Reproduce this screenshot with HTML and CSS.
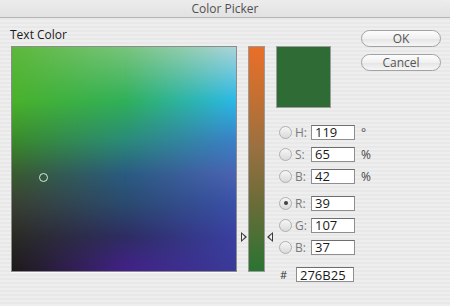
FILE: index.html
```html
<!DOCTYPE html>
<html lang="en">

<head>
    <meta charset="UTF-8">
    <title>Color Picker</title>
    <link rel="stylesheet" href="styles.css">
</head>

<body>
    <div class="window">
        <div class="titlebar">Color Picker</div>
        <div class="content">
            <div class="picker-col">
                <div class="picker-label">Text Color</div>
                <div class="field">
                    <div class="marker"></div>
                </div>
            </div>

            <div class="slider-col">
                <div class="slider">
                    <span class="arrow arrow-left"></span>
                    <span class="arrow arrow-right"></span>
                </div>
            </div>

            <div class="values-col">
                <div class="swatch"></div>

                <div class="value-group">
                    <div class="value-row">
                        <span class="radio"></span>
                        <label class="value-label">H:</label>
                        <input class="value-input" type="text" value="119">
                        <span class="unit">°</span>
                    </div>
                    <div class="value-row">
                        <span class="radio"></span>
                        <label class="value-label">S:</label>
                        <input class="value-input" type="text" value="65">
                        <span class="unit">%</span>
                    </div>
                    <div class="value-row">
                        <span class="radio"></span>
                        <label class="value-label">B:</label>
                        <input class="value-input" type="text" value="42">
                        <span class="unit">%</span>
                    </div>
                </div>

                <div class="value-group">
                    <div class="value-row">
                        <span class="radio checked"></span>
                        <label class="value-label">R:</label>
                        <input class="value-input" type="text" value="39">
                    </div>
                    <div class="value-row">
                        <span class="radio"></span>
                        <label class="value-label">G:</label>
                        <input class="value-input" type="text" value="107">
                    </div>
                    <div class="value-row">
                        <span class="radio"></span>
                        <label class="value-label">B:</label>
                        <input class="value-input" type="text" value="37">
                    </div>
                </div>

                <div class="hex-row">
                    <span class="hash">#</span>
                    <input class="hex-input" type="text" value="276B25">
                </div>
            </div>

            <div class="buttons-col">
                <button class="aqua-btn">OK</button>
                <button class="aqua-btn">Cancel</button>
            </div>
        </div>
    </div>
</body>

</html>
```

FILE: styles.css
```css
/* Aqua style color picker dialog */
body {
    margin: 0;
    padding: 0;
    font-family: "Open Sans", "DejaVu Sans", sans-serif;
    background-color: #ebebeb;
}

.window {
    width: 450px;
    height: 306px;
    overflow: hidden;
    background: repeating-linear-gradient(to bottom, #eeeeee 0, #eeeeee 2px, #e8e8e8 2px, #e8e8e8 4px);
}

.titlebar {
    height: 17px;
    line-height: 17px;
    text-align: center;
    font-size: 12px;
    color: #505050;
    background: linear-gradient(#ececec, #e2e2e2);
    border-bottom: 1px solid #b4b4b4;
    border-top-right-radius: 6px;
}

.content {
    display: flex;
    align-items: flex-start;
    padding: 10px 0 0 11px;
}

.content > div {
    flex-shrink: 0;
}

/* color field */
.picker-label {
    height: 18px;
    line-height: 14px;
    font-size: 12px;
    color: #1a1a1a;
    margin-left: -1px;
}

.field {
    position: relative;
    width: 224px;
    height: 224px;
    border: 1px solid #8c8c8c;
    box-shadow: 0 1px 0 #fafafa;
    background: linear-gradient(to bottom, #5cb83c 0%, #4ab22c 24%, #3a8a2a 42%, #3a5a30 57%, #3a4032 70%, #2a2a24 85%, #1c1a18 100%);
}

.field::before,
.field::after {
    content: "";
    position: absolute;
    inset: 0;
}

.field::before {
    background: linear-gradient(to bottom, #78c47c 0%, #30b058 24%, #2a8a78 42%, #2a5a80 57%, #2a4a6e 70%, #2e2c62 85%, #44208a 100%);
    -webkit-mask-image: linear-gradient(to right, transparent 0%, #000 50%, #000 100%);
    mask-image: linear-gradient(to right, transparent 0%, #000 50%, #000 100%);
}

.field::after {
    background: linear-gradient(to bottom, #aad4da 0%, #2ab8e8 24%, #3a80c8 42%, #4a62b2 57%, #3a50a8 70%, #3a40a0 85%, #3a3a98 100%);
    -webkit-mask-image: linear-gradient(to right, transparent 50%, #000 100%);
    mask-image: linear-gradient(to right, transparent 50%, #000 100%);
}

.marker {
    position: absolute;
    left: 27px;
    top: 126px;
    width: 7px;
    height: 7px;
    border: 1.5px solid #d8f0d0;
    border-radius: 50%;
    z-index: 1;
}

/* hue slider */
.slider-col {
    margin-top: 18px;
    margin-left: 11px;
}

.slider {
    position: relative;
    width: 15px;
    height: 224px;
    border: 1px solid #9a9a9a;
    background: linear-gradient(to bottom, #ea6e28 0%, #c87030 20%, #9a7040 45%, #6a6c38 70%, #2a7432 100%);
}

.arrow {
    position: absolute;
    top: 185px;
    width: 0;
    height: 0;
    border-top: 5px solid transparent;
    border-bottom: 5px solid transparent;
}

.arrow::after {
    content: "";
    position: absolute;
    top: -3px;
    width: 0;
    height: 0;
    border-top: 3px solid transparent;
    border-bottom: 3px solid transparent;
}

.arrow-left {
    left: -8px;
    border-left: 6px solid #3a3a3a;
}

.arrow-left::after {
    left: -5px;
    border-left: 3px solid #f2f2f2;
}

.arrow-right {
    right: -9px;
    border-right: 6px solid #3a3a3a;
}

.arrow-right::after {
    right: -5px;
    border-right: 3px solid #f2f2f2;
}

/* values */
.values-col {
    margin-top: 18px;
    margin-left: 11px;
    width: 85px;
}

.swatch {
    width: 53px;
    height: 60px;
    border: 1px solid #9c9c9c;
    background-color: #2f6b34;
}

.value-group {
    display: flex;
    flex-direction: column;
    gap: 8px;
    margin-top: 17px;
}

.value-group + .value-group {
    margin-top: 13px;
}

.value-row {
    display: flex;
    align-items: center;
    height: 14px;
}

.value-row > *,
.hex-row > * {
    flex-shrink: 0;
}

.radio {
    position: relative;
    box-sizing: border-box;
    width: 13px;
    height: 13px;
    margin-left: 3px;
    border: 1px solid #b0b0b0;
    border-radius: 50%;
    background: linear-gradient(#f6f6f6, #dadada);
}

.radio.checked::after {
    content: "";
    position: absolute;
    left: 3.5px;
    top: 3.5px;
    width: 4px;
    height: 4px;
    border-radius: 50%;
    background-color: #404040;
}

.value-label {
    width: 16px;
    margin-left: 3px;
    font-size: 12px;
    color: #7a7a7a;
}

.value-input,
.hex-input {
    box-sizing: border-box;
    height: 15px;
    padding: 0 0 0 3px;
    margin: 0;
    border: 1px solid #8e8e8e;
    border-top-color: #6e6e6e;
    background-color: #ffffff;
    font-family: "Open Sans", "DejaVu Sans", sans-serif;
    font-size: 13px;
    line-height: 13px;
    color: #1a1a1a;
    outline: none;
}

.value-input {
    width: 44px;
}

.unit {
    margin-left: 6px;
    font-size: 12px;
    color: #444444;
}

.hex-row {
    display: flex;
    align-items: center;
    margin-top: 13px;
}

.hash {
    width: 16px;
    margin-left: 4px;
    font-size: 11px;
    color: #333333;
}

.hex-input {
    width: 58px;
}

/* buttons */
.buttons-col {
    display: flex;
    flex-direction: column;
    gap: 7px;
    margin-top: 2px;
}

.aqua-btn {
    width: 80px;
    height: 17px;
    padding: 0;
    border: 1px solid #a2a2a2;
    border-radius: 9px;
    background: linear-gradient(#fdfdfd, #f0f0f0 50%, #e4e4e4 51%, #f6f6f6);
    font-family: "Open Sans", "DejaVu Sans", sans-serif;
    font-size: 12px;
    line-height: 14px;
    color: #555555;
    cursor: pointer;
}
```
